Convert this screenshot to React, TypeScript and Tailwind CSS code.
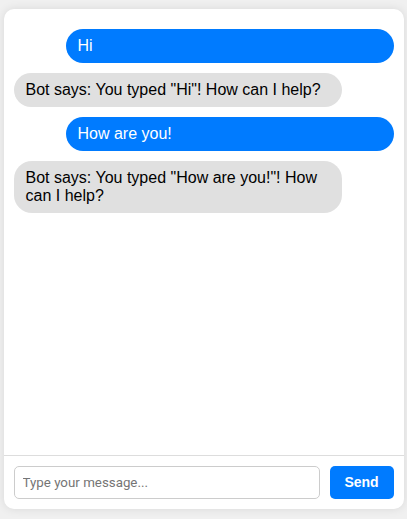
import { useState } from "react";

type Msg = { from: "user" | "bot"; text: string };

const initial: Msg[] = [
  { from: "user", text: "Hi" },
  { from: "bot", text: 'Bot says: You typed "Hi"! How can I help?' },
  { from: "user", text: "How are you!" },
  { from: "bot", text: 'Bot says: You typed "How are you!"! How can I help?' },
];

export default function App() {
  const [messages, setMessages] = useState<Msg[]>(initial);
  const [input, setInput] = useState("");

  const send = () => {
    const t = input.trim();
    if (!t) return;
    setMessages((m) => [
      ...m,
      { from: "user", text: t },
      { from: "bot", text: `Bot says: You typed "${t}"! How can I help?` },
    ]);
    setInput("");
  };

  return (
    <div className="flex h-[519px] justify-center bg-[#f0f0f0] pt-[8.5px] font-['Liberation_Sans',Arial,sans-serif]">
      <div className="flex h-[500px] w-[400px] flex-col overflow-hidden rounded-[10px] bg-white shadow-[0_0_10px_rgba(0,0,0,0.1)]">
        <div className="flex-1 overflow-y-auto p-[10px]">
          {messages.map((m, i) => (
            <div
              key={i}
              className={
                m.from === "user"
                  ? "my-[10px] ml-auto box-content w-[80%] rounded-[18px] bg-[#007bff] px-3 py-2 text-base leading-[18px] text-white"
                  : "my-[10px] mr-auto box-content w-[80%] rounded-[18px] bg-[#e0e0e0] px-3 py-2 text-base leading-[18px] text-black"
              }
            >
              {m.text}
            </div>
          ))}
        </div>
        <div className="flex gap-[10px] border-t border-[#ddd] p-[10px]">
          <input
            value={input}
            onChange={(e) => setInput(e.target.value)}
            onKeyDown={(e) => {
              if (e.key === "Enter") send();
            }}
            placeholder="Type your message..."
            className="h-[33px] flex-1 rounded-[5px] border border-[#ccc] px-2 font-['Roboto',Arial,sans-serif] text-[13.33px] text-black outline-none placeholder:text-[#757575]"
          />
          <button
            onClick={send}
            className="h-[33px] w-16 rounded-[5px] bg-[#007bff] text-sm font-bold text-white"
          >
            Send
          </button>
        </div>
      </div>
    </div>
  );
}
